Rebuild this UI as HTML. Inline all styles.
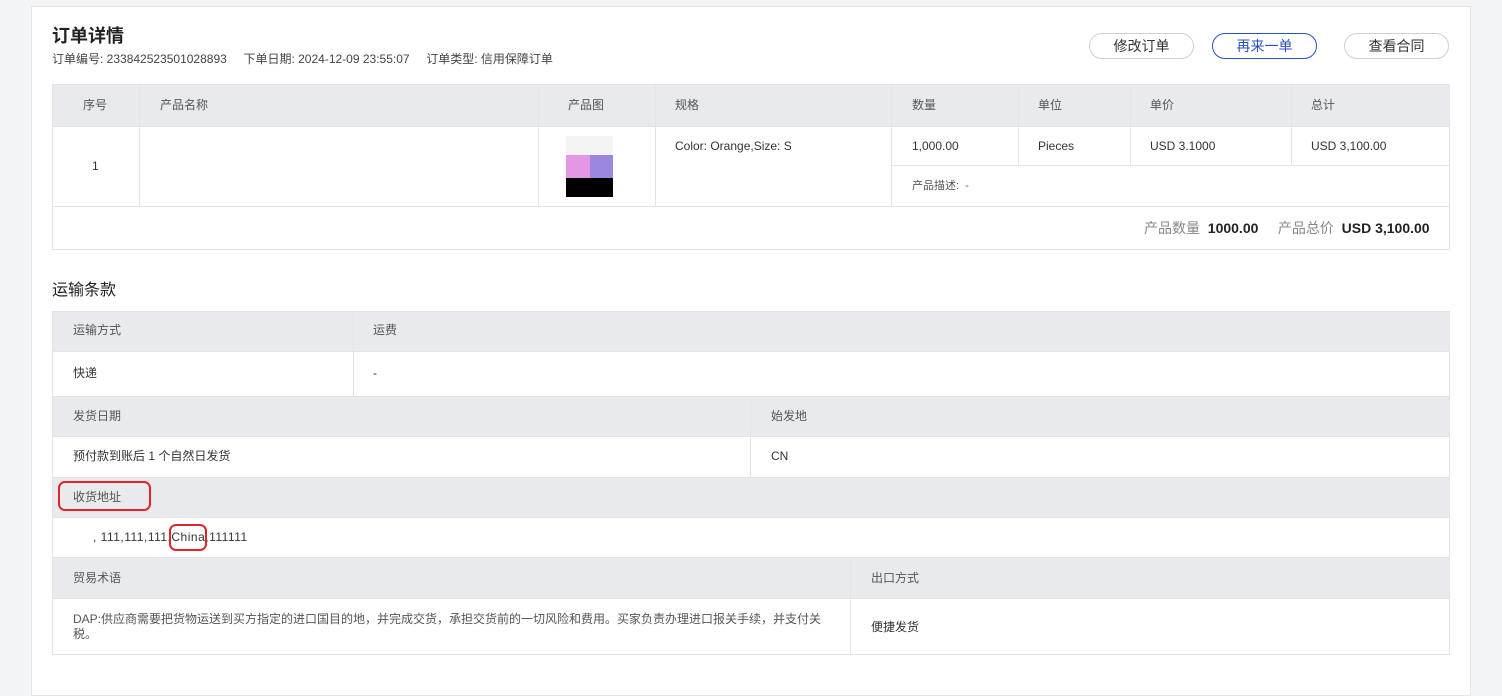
<!DOCTYPE html>
<html><head><meta charset="utf-8"><style>
*{margin:0;padding:0;box-sizing:border-box}
body{width:1502px;height:683px;background:#f3f4f6;font-family:"Liberation Sans","Noto Sans CJK SC",sans-serif;position:relative;overflow:hidden;color:#333}
.p{position:absolute;left:31px;top:6px;width:1440px;height:690px;background:#fff;border:1px solid #e6e6e6}
.a{position:absolute;font-size:12px;white-space:nowrap;line-height:14px}
.box{position:absolute;border:1px solid #e3e4e6}
.hd{position:absolute;background:#e9eaed}
.vl{position:absolute;width:1px;background:#e3e4e6}
.hl{position:absolute;height:1px;background:#e3e4e6}
.btn{position:absolute;top:33px;width:105px;height:26px;border:1px solid #d0d0d0;border-radius:13px;font-size:14px;text-align:center;line-height:24px;color:#333}
.g{color:#555}
</style></head><body>
<div class="p"></div>
<div class="a" style="left:52px;top:25px;font-size:18px;line-height:22px;font-weight:bold;color:#222">订单详情</div>
<div class="a" style="left:52px;top:52px;color:#444">订单编号: 233842523501028893&nbsp;&nbsp;&nbsp;&nbsp;&nbsp;下单日期: 2024-12-09 23:55:07&nbsp;&nbsp;&nbsp;&nbsp;&nbsp;订单类型: 信用保障订单</div>
<div class="btn" style="left:1089px">修改订单</div>
<div class="btn" style="left:1212px;border-color:#2a4fc9;color:#2a4fc9">再来一单</div>
<div class="btn" style="left:1344px">查看合同</div>

<div class="box" style="left:52px;top:84px;width:1398px;height:166px"></div>
<div class="hd" style="left:53px;top:85px;width:1396px;height:41px"></div>
<div class="hl" style="left:53px;top:126px;width:1396px"></div>
<div class="hl" style="left:53px;top:206px;width:1396px"></div>
<div class="hl" style="left:891px;top:165px;width:558px"></div>
<div class="vl" style="left:139px;top:85px;height:121px"></div>
<div class="vl" style="left:538px;top:85px;height:121px"></div>
<div class="vl" style="left:655px;top:85px;height:121px"></div>
<div class="vl" style="left:891px;top:85px;height:121px"></div>
<div class="vl" style="left:1018px;top:85px;height:80px"></div>
<div class="vl" style="left:1130px;top:85px;height:80px"></div>
<div class="vl" style="left:1291px;top:85px;height:80px"></div>
<div class="a g" style="left:83px;top:98px">序号</div>
<div class="a g" style="left:160px;top:98px">产品名称</div>
<div class="a g" style="left:568px;top:98px">产品图</div>
<div class="a g" style="left:675px;top:98px">规格</div>
<div class="a g" style="left:912px;top:98px">数量</div>
<div class="a g" style="left:1038px;top:98px">单位</div>
<div class="a g" style="left:1150px;top:98px">单价</div>
<div class="a g" style="left:1311px;top:98px">总计</div>
<div class="a" style="left:92px;top:159px">1</div>
<div style="position:absolute;left:566px;top:136px;width:47px;height:19px;background:#f4f4f4"></div>
<div style="position:absolute;left:566px;top:155px;width:24px;height:23px;background:#e597e6"></div>
<div style="position:absolute;left:590px;top:155px;width:23px;height:23px;background:#9b86e0"></div>
<div style="position:absolute;left:566px;top:178px;width:47px;height:19px;background:#000"></div>
<div class="a" style="left:675px;top:139px">Color: Orange,Size: S</div>
<div class="a" style="left:912px;top:139px">1,000.00</div>
<div class="a" style="left:1038px;top:139px">Pieces</div>
<div class="a" style="left:1150px;top:139px">USD 3.1000</div>
<div class="a" style="left:1311px;top:139px">USD 3,100.00</div>
<div class="a g" style="left:912px;top:179px;font-size:11px">产品描述:&nbsp;&nbsp;-</div>
<div class="a" style="left:1144px;top:220px;font-size:14px;line-height:16px;color:#888">产品数量&nbsp;&nbsp;<b style="color:#222">1000.00</b>&nbsp;&nbsp;&nbsp;&nbsp;&nbsp;产品总价&nbsp;&nbsp;<b style="color:#222">USD 3,100.00</b></div>

<div class="a" style="left:52px;top:282px;font-size:16px;line-height:18px;color:#222">运输条款</div>

<div class="box" style="left:52px;top:311px;width:1398px;height:344px"></div>
<div class="hd" style="left:53px;top:312px;width:1396px;height:39px"></div>
<div class="hd" style="left:53px;top:397px;width:1396px;height:39px"></div>
<div class="hd" style="left:53px;top:478px;width:1396px;height:39px"></div>
<div class="hd" style="left:53px;top:558px;width:1396px;height:40px"></div>
<div class="hl" style="left:53px;top:351px;width:1396px"></div>
<div class="hl" style="left:53px;top:396px;width:1396px"></div>
<div class="hl" style="left:53px;top:436px;width:1396px"></div>
<div class="hl" style="left:53px;top:477px;width:1396px"></div>
<div class="hl" style="left:53px;top:517px;width:1396px"></div>
<div class="hl" style="left:53px;top:557px;width:1396px"></div>
<div class="hl" style="left:53px;top:598px;width:1396px"></div>
<div class="vl" style="left:353px;top:312px;height:84px"></div>
<div class="vl" style="left:750px;top:397px;height:80px"></div>
<div class="vl" style="left:850px;top:558px;height:96px"></div>
<div class="a g" style="left:73px;top:323px">运输方式</div>
<div class="a g" style="left:373px;top:323px">运费</div>
<div class="a" style="left:73px;top:366px">快递</div>
<div class="a" style="left:373px;top:366px">-</div>
<div class="a g" style="left:73px;top:409px">发货日期</div>
<div class="a g" style="left:771px;top:409px">始发地</div>
<div class="a" style="left:73px;top:449px">预付款到账后 1 个自然日发货</div>
<div class="a" style="left:771px;top:449px">CN</div>
<div class="a g" style="left:73px;top:490px">收货地址</div>
<div style="position:absolute;left:58px;top:481px;width:93px;height:30px;border:2px solid #e0262a;border-radius:7px"></div>
<div class="a" style="left:93px;top:530px;letter-spacing:0.5px">, 111,111,111,China,111111</div>
<div style="position:absolute;left:169px;top:524px;width:38px;height:27px;border:2px solid #e0262a;border-radius:7px"></div>
<div class="a g" style="left:73px;top:571px">贸易术语</div>
<div class="a g" style="left:871px;top:571px">出口方式</div>
<div class="a g" style="left:73px;top:612px;white-space:normal;width:760px;line-height:15px">DAP:供应商需要把货物运送到买方指定的进口国目的地，并完成交货，承担交货前的一切风险和费用。买家负责办理进口报关手续，并支付关税。</div>
<div class="a" style="left:871px;top:620px">便捷发货</div>
</body></html>
